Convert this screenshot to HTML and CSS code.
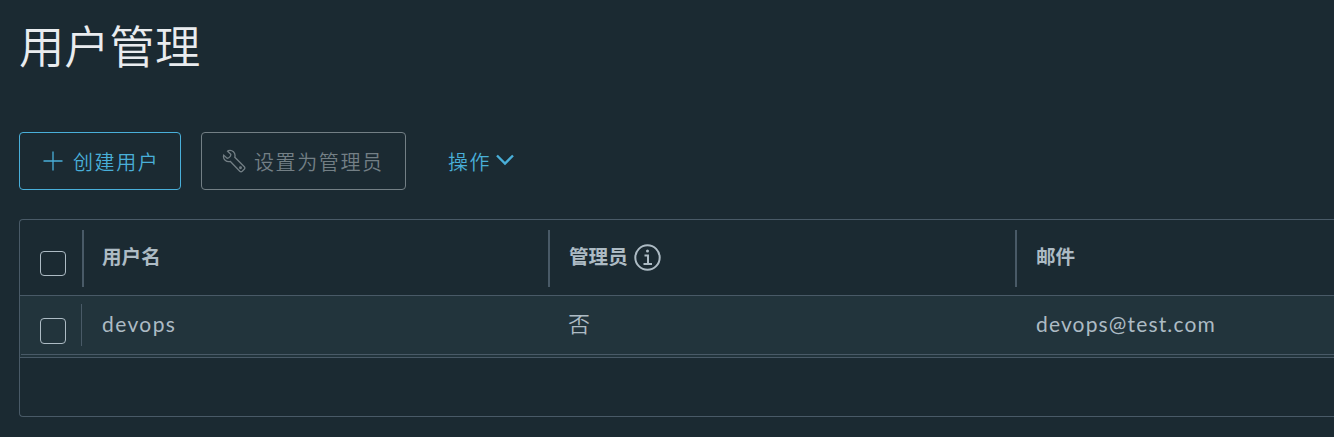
FILE: index.html
```
<!DOCTYPE html>
<html lang="zh-CN">
<head>
<meta charset="utf-8">
<title>用户管理</title>
<link rel="stylesheet" href="styles.css">
</head>
<body>
<main class="page">
  <h1 class="title">用户管理</h1>
  <div class="toolbar">
    <button class="btn create">
      <svg class="plus" width="20" height="20" viewBox="0 0 20 20"><path d="M10 .5V19.500M.5 10H19.500"/></svg>
      <span>创建用户</span>
    </button>
    <button class="btn admin" disabled>
      <svg class="wrench" width="24" height="24" viewBox="0 0 24 24"><path d="M6.300 1.600C10.200 .4 14 3.800 12.800 8.200L22.300 17.700Q23.400 19 22.200 20.300L20.200 22.300Q19 23.300 17.800 22.200L8.400 12.500C4.400 13.500 .6 10.300 1.700 6.100L5 9.200C6.500 9.500 9 7.300 8.800 5.400L5.600 2.200Z"/><circle cx="18.500" cy="18.700" r=".8"/></svg>
      <span>设置为管理员</span>
    </button>
    <button class="btn actions">
      <span>操作</span>
      <svg class="caret" width="18" height="12" viewBox="0 0 18 12"><path d="M1 1.500L9 9.500L17 1.500"/></svg>
    </button>
  </div>
  <section class="grid">
    <div class="row head">
      <div class="check"><i class="box"></i></div>
      <div class="cell first">用户名</div>
      <div class="cell">管理员
        <svg class="info" width="27" height="27" viewBox="0 0 27 27"><circle cx="13.500" cy="13.500" r="12.200"/><path d="M10.500 11.500H14V20M9.500 20H18"/><circle class="dot" cx="13.500" cy="7" r="1.500"/></svg>
      </div>
      <div class="cell">邮件</div>
    </div>
    <div class="row data">
      <div class="check"><i class="box"></i></div>
      <div class="cell user">devops</div>
      <div class="cell no">否</div>
      <div class="cell mail">devops@test.com</div>
    </div>
  </section>
</main>
</body>
</html>
```
FILE: styles.css
```
* { box-sizing: border-box; }
body {
  margin: 0;
  height: 437px;
  overflow: hidden;
  background: #1b2a32;
  color: #adbbc4;
  font-family: "Noto Sans CJK SC", sans-serif;
}
.page { padding: 12px 0 0 19px; }
.title {
  margin: 0;
  height: 120px;
  color: #e9ecef;
  font-size: 45.3px;
  line-height: 64px;
  font-weight: 350;
}
.toolbar { display: flex; height: 58px; }
.btn {
  display: flex;
  align-items: center;
  height: 58px;
  padding: 0;
  border: 1px solid #49afd9;
  border-radius: 4px;
  background: none;
  color: #49afd9;
  font: 350 20px/30px "Noto Sans CJK SC", sans-serif;
  letter-spacing: 1.6px;
  white-space: nowrap;
}
.btn svg { fill: none; stroke: currentColor; flex: none; }
.btn span { padding-top: 2px; }
.create { width: 162px; padding-left: 23px; gap: 10px; }
.plus { stroke-width: 1.3; }
.admin {
  width: 205px;
  margin-left: 20px;
  padding-left: 20px;
  gap: 8px;
  border-color: #737f85;
  color: #737f85;
}
.wrench { stroke-width: 1.3; }
.actions { margin-left: 41px; border-color: transparent; gap: 5px; }
.actions .caret { stroke-width: 2.4; margin-top: -2px; }
.grid {
  height: 198px;
  margin-top: 29px;
  border: 1px solid #495a67;
  border-right: 0;
  border-radius: 4px 0 0 4px;
}
.row { display: grid; grid-template-columns: 61px 467px 467px 1fr; }
.head {
  height: 75px;
  padding: 10px 0 8px;
  grid-template-columns: 62px 466px 467px 1fr;
}
.head .cell {
  display: flex;
  align-items: center;
  gap: 6px;
  height: 57px;
  padding: 0 0 6px 19px;
  border-left: 2px solid #495a67;
  font-size: 19.6px;
  font-weight: 700;
}
.head .first { padding-left: 18px; }
.check { padding-left: 20px; }
.box {
  display: block;
  width: 26px;
  height: 26px;
  border: 1px solid #adbbc4;
  border-radius: 4px;
}
.head .box { height: 25px; margin-top: 21px; }
.info { fill: none; stroke: #adbbc4; stroke-width: 2; position: relative; top: 2px; }
.info .dot { fill: #adbbc4; stroke: none; }
.data {
  height: 63px;
  padding-top: 8px;
  border-top: 1px solid #495a67;
  border-bottom: 1px solid #495a67;
  background: linear-gradient(#495a67, #495a67) 1px 58px / 100% 1px no-repeat, #22343c;
}
.data .box { margin-top: 14px; }
.data .cell {
  height: 42px;
  padding-left: 21px;
  font: 400 21px/40px Lato, "Noto Sans CJK SC", sans-serif;
}
.data .user { border-left: 1px solid #495a67; padding-left: 20px; letter-spacing: 1.4px; }
.data .no { font-weight: 350; font-size: 22px; padding-left: 20px; }
.data .mail { letter-spacing: 1.15px; }
```
